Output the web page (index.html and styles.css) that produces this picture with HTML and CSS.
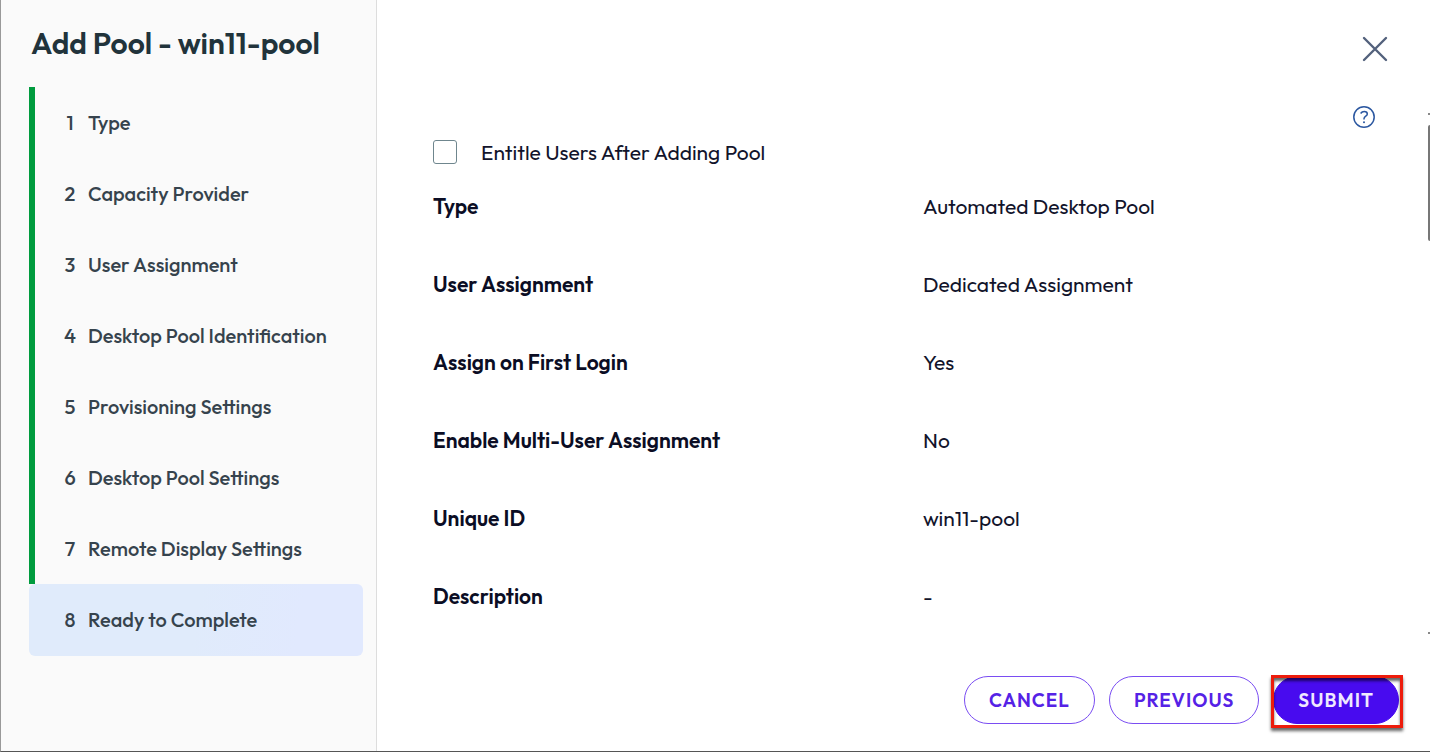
FILE: index.html
```
<!DOCTYPE html>
<html lang="en">

<head>
	<meta charset="utf-8">
	<title>Add Pool - win11-pool</title>
	<link rel="stylesheet" href="styles.css">
</head>

<body>
	<div class="wizard">
		<!-- Steps on the left, the green line marks the completed ones -->
		<aside class="sidebar">
			<h1 class="title">Add Pool - win11-pool</h1>
			<ol class="steps">
				<li class="step done"><span class="number">1</span>Type</li>
				<li class="step done"><span class="number">2</span>Capacity Provider</li>
				<li class="step done"><span class="number">3</span>User Assignment</li>
				<li class="step done"><span class="number">4</span>Desktop Pool Identification</li>
				<li class="step done"><span class="number">5</span>Provisioning Settings</li>
				<li class="step done"><span class="number">6</span>Desktop Pool Settings</li>
				<li class="step done"><span class="number">7</span>Remote Display Settings</li>
				<li class="step current" aria-current="step"><span class="number">8</span>Ready to Complete</li>
			</ol>
		</aside>

		<main class="main">
			<header class="header">
				<button class="icon-button" type="button" aria-label="Close">
					<svg width="28" height="28" viewBox="0 0 28 28" fill="none" stroke="#53617c" stroke-width="2.4" stroke-linecap="round">
						<path d="M3 3L25 25M25 3L3 25" />
					</svg>
				</button>
			</header>

			<div class="content">
				<div class="help">
					<button class="icon-button" type="button" aria-label="Help">
						<svg width="24" height="24" viewBox="0 0 24 24" fill="none" stroke="#2b57a0" stroke-width="1.5">
							<circle cx="12" cy="12" r="10.2" />
							<path d="M8.6 8.5C9.6 7.1 10.8 6.6 12.2 6.6C14 6.6 15.3 7.5 15.3 9C15.3 11.2 12 11.2 12 13.8V14.6" />
							<circle cx="12" cy="17.2" r="1" fill="#2b57a0" stroke="none" />
						</svg>
					</button>
				</div>

				<div class="entitle">
					<input type="checkbox" id="entitle">
					<label for="entitle">Entitle Users After Adding Pool</label>
				</div>

				<table class="summary">
					<tr>
						<th scope="row">Type</th>
						<td>Automated Desktop Pool</td>
					</tr>
					<tr>
						<th scope="row">User Assignment</th>
						<td>Dedicated Assignment</td>
					</tr>
					<tr>
						<th scope="row">Assign on First Login</th>
						<td>Yes</td>
					</tr>
					<tr>
						<th scope="row">Enable Multi-User Assignment</th>
						<td>No</td>
					</tr>
					<tr>
						<th scope="row">Unique ID</th>
						<td>win11-pool</td>
					</tr>
					<tr>
						<th scope="row">Description</th>
						<td>-</td>
					</tr>
				</table>

				<!-- Edge of the scroll bar -->
				<div class="scrollbar">
					<span class="arrow"></span>
					<span class="thumb"></span>
					<span class="arrow last"></span>
				</div>
			</div>

			<footer class="footer">
				<button class="button" type="button">CANCEL</button>
				<button class="button" type="button">PREVIOUS</button>
				<div class="submit">
					<button class="button primary" type="submit">SUBMIT</button>
					<span class="highlight"></span>
				</div>
			</footer>
		</main>
	</div>
</body>

</html>
```

FILE: styles.css
```
* {
	box-sizing: border-box;
}

body {
	margin: 0;
	background-color: #fff;
	font-family: Outfit, Lato, "Liberation Sans", sans-serif;
	color: #12142b;
}

.wizard {
	display: flex;
	min-height: 100vh;
	border-left: 1px solid #999;
	border-bottom: 1px solid #555;
}

/* left side */
.sidebar {
	flex: none;
	width: 376px;
	padding: 23px 13px 0 28px;
	background-color: #fafafa;
	border-right: 1px solid #ddd;
}

.title {
	margin: 0 0 24px 2px;
	font-size: 30px;
	line-height: 40px;
	font-weight: 600;
	color: #21333b;
}

.steps {
	margin: 0;
	padding: 0;
	list-style: none;
}

.step {
	display: flex;
	align-items: center;
	height: 71px;
	padding-left: 34px;
	border-left: 6px solid transparent;
	font-size: 20px;
	line-height: 24px;
	font-weight: 500;
	color: #36434d;
}

.step.done {
	padding-left: 28px;
	border-left-color: #009b3e;
}

.step.current {
	height: 72px;
	border-left: 0;
	border-radius: 6px;
	background: linear-gradient(100deg, #e0ebfb 50%, #e1e9fe 80%);
}

.number {
	width: 14px;
	margin-right: 11px;
	text-align: center;
}

/* right side */
.main {
	flex: 1;
	display: flex;
	flex-direction: column;
	min-width: 0;
}

.header {
	display: flex;
	justify-content: flex-end;
	padding: 35px 41px 34px 0;
}

.icon-button {
	display: block;
	padding: 0;
	border: 0;
	background: none;
	cursor: pointer;
}

.icon-button svg {
	display: block;
}

.content {
	position: relative;
	flex: 1;
	padding: 8px 17px 0 56px;
}

.help {
	display: flex;
	justify-content: flex-end;
	padding-right: 37px;
}

.entitle {
	display: flex;
	align-items: center;
	gap: 24px;
	margin-top: 10px;
	font-size: 21px;
	line-height: 26px;
}

.entitle input {
	appearance: none;
	width: 24px;
	height: 24px;
	margin: 0;
	border: 1px solid #6f868e;
	border-radius: 3px;
	background-color: #fff;
}

.summary {
	width: 100%;
	margin-top: 27px;
	border-collapse: collapse;
	table-layout: fixed;
}

.summary th,
.summary td {
	height: 78px;
	padding: 0;
	text-align: left;
	vertical-align: top;
	font-size: 21px;
	line-height: 28px;
}

.summary th {
	font-weight: 600;
	color: #0b0d24;
}

.scrollbar {
	position: absolute;
	top: 0;
	right: 0;
	bottom: 16px;
	display: flex;
	flex-direction: column;
	width: 2px;
}

.arrow {
	width: 2px;
	height: 2px;
	margin: 16px 0 10px;
	background-color: #888;
}

.arrow.last {
	margin-top: auto;
}

.thumb {
	height: 116px;
	border-radius: 2px 0 0 2px;
	background-color: #777;
}

.footer {
	display: flex;
	justify-content: flex-end;
	gap: 14px;
	padding: 16px 31px 27px;
}

.button {
	height: 48px;
	padding: 0 24px;
	border: 1px solid #7a4df2;
	border-radius: 24px;
	background-color: #fff;
	font-family: inherit;
	font-size: 19px;
	line-height: 24px;
	font-weight: 600;
	letter-spacing: 1px;
	color: #5522e6;
	cursor: pointer;
}

.button.primary {
	border-color: #480bef;
	background-color: #480bef;
	color: #efe9ff;
}

.submit {
	position: relative;
	display: flex;
}

/* red frame drawn over the button */
.highlight {
	position: absolute;
	inset: -1px -4px -4px -2px;
	border: 3px solid #ed1c0c;
	box-shadow: 0 3px 3px rgba(0, 0, 0, 0.6), inset 0 3px 3px rgba(0, 0, 0, 0.6);
	pointer-events: none;
}
```
